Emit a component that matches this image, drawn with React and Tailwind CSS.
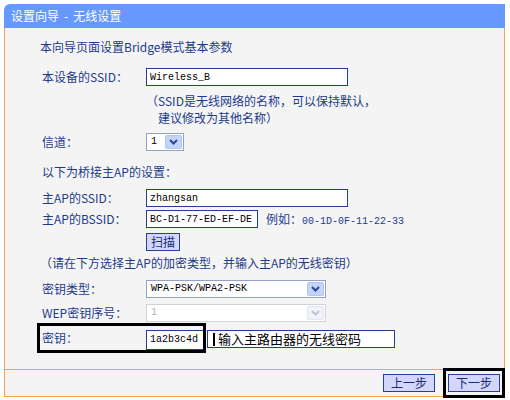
import React from "react";

const navy = "text-[#1d3b8d]";

function Chevron({ disabled }) {
  return (
    <svg width="9" height="6" viewBox="0 0 9 6">
      <path
        d="M1 1 L4.5 4.5 L8 1"
        fill="none"
        stroke={disabled ? "#b9c3d6" : "#2a4a8c"}
        strokeWidth="2"
      />
    </svg>
  );
}

function Select({ value, width, disabled }) {
  return (
    <div
      className={
        "flex h-[18px] bg-white border " +
        (disabled ? "border-[#cfd3dc]" : "border-[#8fa3c3]")
      }
      style={{ width }}
    >
      <span
        className={
          "flex-1 pl-[4px] leading-[16px] text-[10px] font-['Liberation_Mono',monospace] " +
          (disabled ? "text-[#b0b0b0]" : "text-black")
        }
      >
        {value}
      </span>
      <span
        className={
          "w-[17px] m-[1px] rounded-[2px] flex items-center justify-center " +
          (disabled
            ? "bg-[#f1f3f8] border border-[#e2e6ee]"
            : "bg-[#c3d3fb] border border-[#b2c5f0]")
        }
      >
        <Chevron disabled={disabled} />
      </span>
    </div>
  );
}

function TextBox({ value, width }) {
  return (
    <input
      readOnly
      value={value}
      className="h-[18px] border border-[#23408e] bg-white pl-[3px] text-[10px] text-black font-['Liberation_Mono',monospace] outline-none"
      style={{ width }}
    />
  );
}

function Row({ label, children, className = "" }) {
  return (
    <div className={"flex items-center h-[18px] pl-[37px] " + className}>
      <div className="w-[104px] shrink-0">{label}</div>
      {children}
    </div>
  );
}

function Button({ children }) {
  return (
    <button className="h-[18px] px-[7px] bg-[#d3d6ff] border border-[#2c3f8e] text-[12px] leading-[16px] text-[#1a2c6e]">
      {children}
    </button>
  );
}

export default function App() {
  return (
    <div
      className={
        "w-[510px] h-[400px] bg-white pt-[4px] pl-[4px] text-[12px] font-['Noto_Sans_CJK_SC',sans-serif] " +
        navy
      }
    >
      <div className="w-[501px]">
        <div className="h-[24px] bg-[#6699ff] rounded-tl-[6px] flex items-center pl-[7px] text-white">
          设置向导<span className="mx-[5px]">-</span>无线设置
        </div>

        <div className="h-[341px] pt-[11px] border-x border-[#f5a54f] bg-[#f4f4f4]">
          <p className="h-[16px] leading-[16px] pl-[35px]">
            本向导页面设置Bridge模式基本参数
          </p>

          <Row label="本设备的SSID：" className="mt-[13px]">
            <TextBox value="Wireless_B" width={202} />
          </Row>

          <div className="mt-[6px] pl-[141px] leading-[17px]">
            <div>（SSID是无线网络的名称，可以保持默认，</div>
            <div className="pl-[12px]">建议修改为其他名称）</div>
          </div>

          <Row label="信道：" className="mt-[7px]">
            <Select value="1" width={38} />
          </Row>

          <p className="mt-[13px] h-[16px] leading-[16px] pl-[37px]">
            以下为桥接主AP的设置：
          </p>

          <Row label="主AP的SSID：" className="mt-[9px]">
            <TextBox value="zhangsan" width={202} />
          </Row>

          <Row label="主AP的BSSID：" className="mt-[3px]">
            <TextBox value="BC-D1-77-ED-EF-DE" width={112} />
            <span className="ml-[8px]">
              例如：
              <span className="font-['Liberation_Mono',monospace] text-[10px]">
                00-1D-0F-11-22-33
              </span>
            </span>
          </Row>

          <Row label="" className="mt-[5px]">
            <button className="h-[18px] px-[4px] bg-[#d3d6ff] border border-[#2c3f8e] text-[12px] leading-[16px] text-[#1a2c6e]">
              扫描
            </button>
          </Row>

          <p className="mt-[4px] h-[16px] leading-[16px] pl-[35px]">
            （请在下方选择主AP的加密类型，并输入主AP的无线密钥）
          </p>

          <Row label="密钥类型：" className="mt-[9px]">
            <Select value="WPA-PSK/WPA2-PSK" width={180} />
          </Row>

          <Row label="WEP密钥序号：" className="mt-[6px]">
            <Select value="1" width={180} disabled />
          </Row>

          <div className="relative mt-[1px] h-[30px] flex items-center pl-[37px]">
            <div className="w-[104px] shrink-0">密钥：</div>
            <input
              readOnly
              value="1a2b3c4d"
              className="mt-[3px] h-[20px] w-[58px] border border-[#23408e] bg-white pl-[3px] text-[10px] text-black font-['Liberation_Mono',monospace] outline-none"
            />
            <div className="ml-[3px] mt-[2px] h-[18px] w-[188px] border border-[#23408e] bg-white flex items-center pl-[5px] text-[13px] text-black">
              <span className="inline-block w-[2px] h-[13px] bg-black mr-[3px]" />
              输入主路由器的无线密码
            </div>
            <div className="absolute left-[32px] top-0 w-[169px] h-[30px] border-[3px] border-black" />
          </div>
        </div>

        <div className="relative h-[28px] border border-[#f5a54f] bg-[#f4f4f4] flex items-center justify-end gap-[13px] pr-[4px]">
          <Button>上一步</Button>
          <Button>下一步</Button>
          <div className="absolute left-[438px] top-[-2px] w-[62px] h-[30px] border-[3px] border-black" />
        </div>
      </div>
    </div>
  );
}
